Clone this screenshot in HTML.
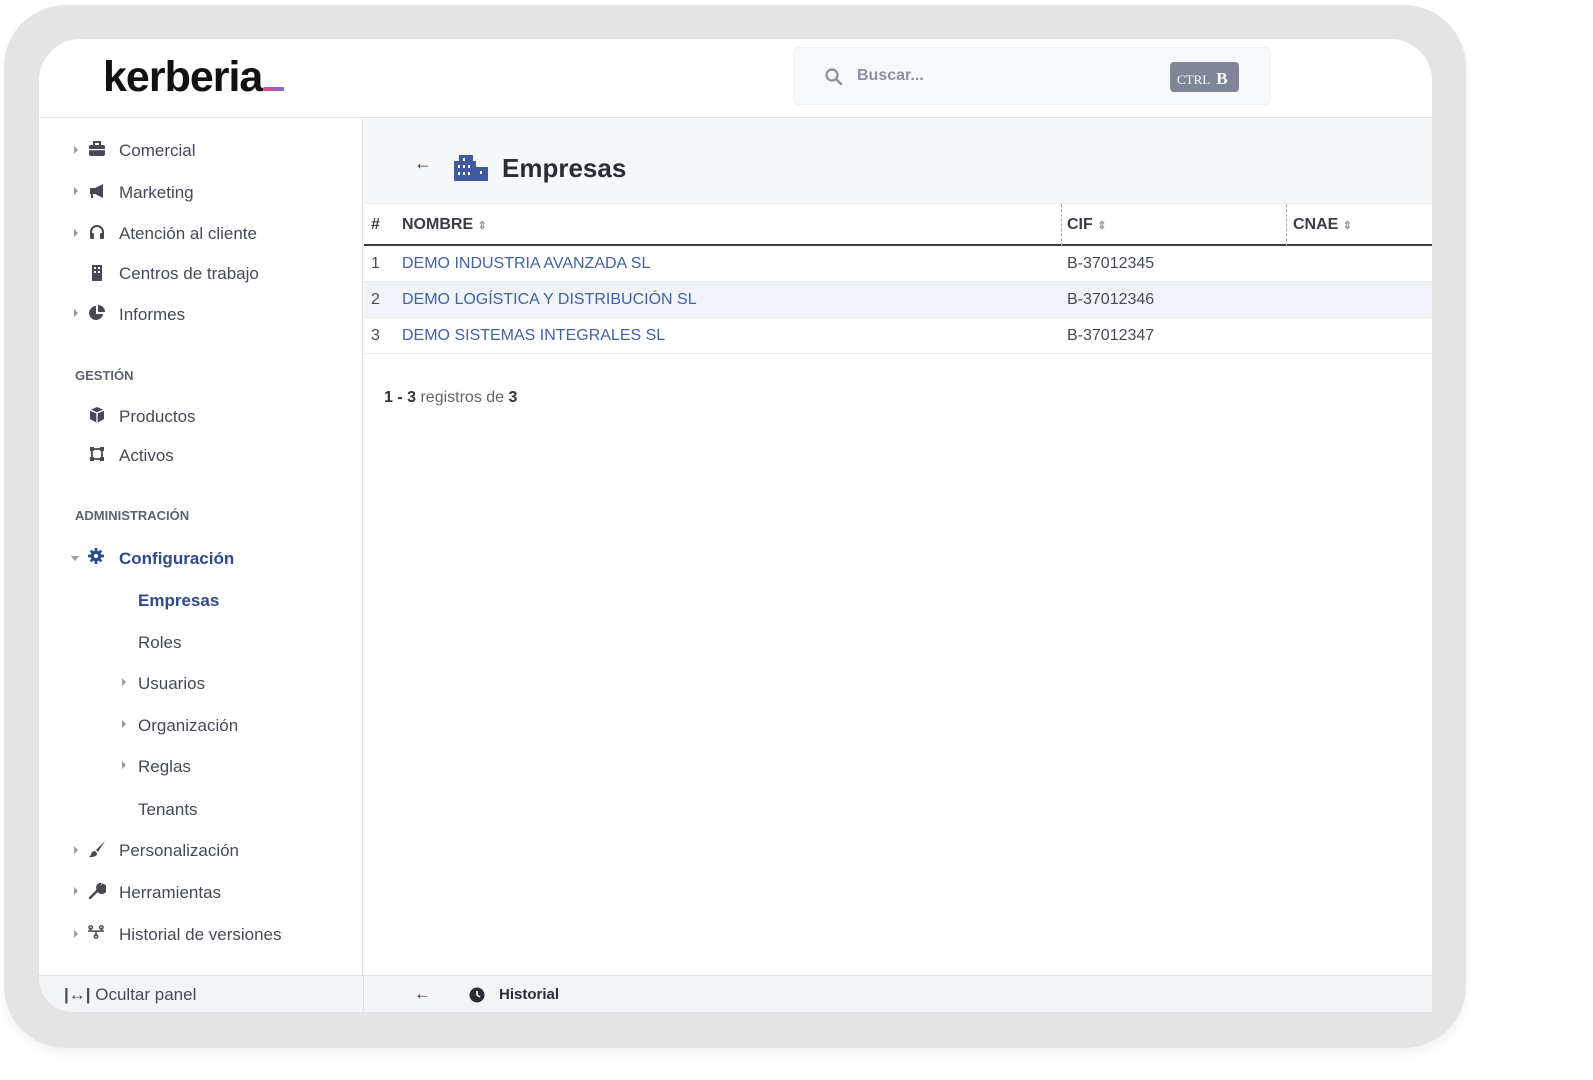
<!DOCTYPE html>
<html><head><meta charset="utf-8"><style>
*{box-sizing:border-box;margin:0;padding:0}
body{width:1593px;height:1080px;background:#fff;font-family:"Liberation Sans",sans-serif;position:relative;overflow:hidden;color:#454a56}
.frame{position:absolute;left:4px;top:5px;width:1462px;height:1043px;background:#e4e4e4;border-radius:62px;box-shadow:0 6px 10px rgba(0,0,0,.05)}
.screen{position:absolute;left:39px;top:39px;width:1393px;height:973px;background:#fff;border-radius:42px 42px 0 34px;overflow:hidden}
.hdr{position:absolute;left:0;top:0;width:100%;height:79px;border-bottom:1px solid #e3e5e9;background:#fff}
.logo{position:absolute;left:64px;top:14px;font-size:43px;font-weight:bold;color:#111;letter-spacing:-1px}
.logo i{display:inline-block;width:20px;height:4px;background:linear-gradient(90deg,#e8457b,#7a6fd8);margin-left:2px;vertical-align:0}
.search{position:absolute;left:754px;top:8px;width:478px;height:58px;background:#f7f8fa;border:1px solid #eef0f3;border-radius:6px}
.search span{position:absolute;left:63px;top:19px;font-size:16px;font-weight:bold;color:#8b91a0}
.kbd{position:absolute;left:376px;top:14px;width:69px;height:30px;background:#7f8596;border-radius:4px;color:#fff;font-family:"Liberation Serif",serif;font-size:13px;padding:7px 0 0 7px}
.kbd b{font-size:17px;margin-left:6px}
.side{position:absolute;left:0;top:80px;width:324px;height:856px;border-right:1px solid #dfe2e7}
.it{position:absolute;font-size:17px;color:#454a56}
.car{position:absolute;width:0;height:0;border-left:4px solid #999;border-top:4px solid transparent;border-bottom:4px solid transparent}
.sec{position:absolute;left:36px;font-size:13px;font-weight:bold;color:#5d6270}
.ic{position:absolute;width:18px;height:16px}
.main{position:absolute;left:325px;top:80px;right:0;height:856px}
.mh{height:85px;background:#f6f7f9;border-bottom:1px solid #eceef1;position:relative}
.th{position:absolute;top:85px;left:0;right:0;height:42px;border-bottom:2px solid #3a3d45;font-weight:bold;font-size:16px;color:#3a3d45}
.row{position:absolute;left:0;right:0;height:36px;border-bottom:1px solid #e8eaee;font-size:16px}
.row span{position:absolute;top:9px}
.lnk{color:#4262a0}
.foot{position:absolute;left:0;top:936px;width:100%;height:37px;background:#f3f4f7;border-top:1px solid #dcdfe4}
</style></head><body>
<div class="frame"></div>
<div class="screen">
 <div class="hdr">
  <div class="logo">kerberia<i></i></div>
  <div class="search">
   <svg style="position:absolute;left:30px;top:19px" width="20" height="20" viewBox="0 0 20 20"><circle cx="8" cy="8" r="5.5" fill="none" stroke="#8b91a0" stroke-width="2.2"/><path d="M12 12l5 5" stroke="#8b91a0" stroke-width="2.6" stroke-linecap="round"/></svg>
   <span>Buscar...</span>
   <div class="kbd">CTRL<b>B</b></div>
  </div>
 </div>
 <div class="side">
  <div class="car" style="left:35px;top:27px"></div><svg class="ic" style="left:49px;top:22px" viewBox="0 0 18 16"><rect x="1" y="4" width="16" height="11" rx="2" fill="#454a56"/><rect x="6" y="1" width="6" height="4" fill="none" stroke="#454a56" stroke-width="2"/><rect x="1" y="8" width="16" height="1.2" fill="#fff"/></svg><div class="it" style="left:80px;top:22px">Comercial</div>
  <div class="car" style="left:35px;top:68px"></div><svg class="ic" style="left:49px;top:64px" viewBox="0 0 18 16"><path d="M2 5h5l8-4v14l-8-4H5v4H3v-4H2z" fill="#454a56"/></svg><div class="it" style="left:80px;top:64px">Marketing</div>
  <div class="car" style="left:35px;top:110px"></div><svg class="ic" style="left:49px;top:105px" viewBox="0 0 18 16"><path d="M3 10V8a6 6 0 0112 0v2" fill="none" stroke="#454a56" stroke-width="2"/><rect x="2" y="9" width="4" height="6" rx="1" fill="#454a56"/><rect x="12" y="9" width="4" height="6" rx="1" fill="#454a56"/></svg><div class="it" style="left:80px;top:105px">Atención al cliente</div>
  <svg class="ic" style="left:49px;top:146px" viewBox="0 0 18 16"><rect x="4" y="0" width="10" height="16" fill="#454a56"/><rect x="6" y="2" width="2" height="2" fill="#fff"/><rect x="10" y="2" width="2" height="2" fill="#fff"/><rect x="6" y="6" width="2" height="2" fill="#fff"/><rect x="10" y="6" width="2" height="2" fill="#fff"/></svg><div class="it" style="left:80px;top:145px">Centros de trabajo</div>
  <div class="car" style="left:35px;top:190px"></div><svg class="ic" style="left:49px;top:186px" viewBox="0 0 18 16"><path d="M8 1a7 7 0 107 8H8z" fill="#454a56"/><path d="M10 0v7h7a7 7 0 00-7-7z" fill="#454a56"/></svg><div class="it" style="left:80px;top:186px">Informes</div>
  <div class="sec" style="top:249px">GESTIÓN</div>
  <svg class="ic" style="left:49px;top:288px" viewBox="0 0 18 16"><path d="M9 0l7 3v9l-7 4-7-4V3z" fill="#454a56"/><path d="M2 3l7 3 7-3M9 6v10" stroke="#fff" stroke-width="1.3" fill="none"/></svg><div class="it" style="left:80px;top:288px">Productos</div>
  <svg class="ic" style="left:49px;top:327px" viewBox="0 0 18 16"><rect x="4" y="3" width="10" height="10" fill="none" stroke="#454a56" stroke-width="1.8"/><rect x="2" y="1" width="4" height="4" fill="#454a56"/><rect x="12" y="1" width="4" height="4" fill="#454a56"/><rect x="2" y="11" width="4" height="4" fill="#454a56"/><rect x="12" y="11" width="4" height="4" fill="#454a56"/></svg><div class="it" style="left:80px;top:327px">Activos</div>
  <div class="sec" style="top:389px">ADMINISTRACIÓN</div>
  <div style="position:absolute;left:32px;top:437px;border-top:5px solid #999;border-left:4px solid transparent;border-right:4px solid transparent"></div>
  <svg class="ic" style="left:48px;top:429px" viewBox="0 0 18 18"><circle cx="9" cy="9" r="6" fill="#2f4a8c"/><path d="M9 0v18M0 9h18M3 3l12 12M15 3L3 15" stroke="#2f4a8c" stroke-width="3"/><circle cx="9" cy="9" r="2.4" fill="#fff"/></svg><div class="it" style="left:80px;top:430px;color:#2f4a8c;font-weight:bold">Configuración</div>
  <div class="it" style="left:99px;top:472px;color:#2f4a8c;font-weight:bold">Empresas</div>
  <div class="it" style="left:99px;top:514px">Roles</div>
  <div class="car" style="left:83px;top:559px"></div><div class="it" style="left:99px;top:555px">Usuarios</div>
  <div class="car" style="left:83px;top:601px"></div><div class="it" style="left:99px;top:597px">Organización</div>
  <div class="car" style="left:83px;top:642px"></div><div class="it" style="left:99px;top:638px">Reglas</div>
  <div class="it" style="left:99px;top:681px">Tenants</div>
  <div class="car" style="left:35px;top:727px"></div><svg class="ic" style="left:49px;top:722px" viewBox="0 0 18 16"><path d="M17 0L8 9l2 2z" fill="#454a56"/><path d="M7 10c-3 0-4 2-4 4l-2 2c4 0 8 0 8-4z" fill="#454a56"/></svg><div class="it" style="left:80px;top:722px">Personalización</div>
  <div class="car" style="left:35px;top:768px"></div><svg class="ic" style="left:49px;top:764px" viewBox="0 0 18 16"><path d="M2 15l8-8M10 7a4 4 0 105-5l-2 3-2-1 1-3a4 4 0 00-2 6z" stroke="#454a56" stroke-width="2.5" fill="#454a56" stroke-linecap="round"/></svg><div class="it" style="left:80px;top:764px">Herramientas</div>
  <div class="car" style="left:35px;top:811px"></div><svg class="ic" style="left:48px;top:805px" viewBox="0 0 20 16"><path d="M1 7h18M4 3v4M16 3v4M10 7v6" stroke="#454a56" stroke-width="1.6" fill="none"/><circle cx="4" cy="3" r="2" fill="none" stroke="#454a56" stroke-width="1.4"/><circle cx="16" cy="3" r="2" fill="none" stroke="#454a56" stroke-width="1.4"/><circle cx="10" cy="13" r="2" fill="none" stroke="#454a56" stroke-width="1.4"/></svg><div class="it" style="left:80px;top:806px">Historial de versiones</div>
 </div>
 <div class="main">
  <div class="mh">
   <div style="position:absolute;left:50px;top:34px;font-size:18px;color:#333">&#8592;</div>
   <svg style="position:absolute;left:90px;top:34px" width="34" height="28" viewBox="0 0 34 28"><rect x="0" y="8" width="22" height="20" fill="#3f5aa0"/><rect x="5" y="2" width="14" height="8" fill="#3f5aa0"/><rect x="22" y="14" width="12" height="14" fill="#3f5aa0"/><g fill="#fff"><rect x="4" y="12" width="2" height="3"/><rect x="9" y="12" width="2" height="3"/><rect x="14" y="12" width="2" height="3"/><rect x="4" y="19" width="2" height="3"/><rect x="9" y="19" width="2" height="3"/><rect x="14" y="19" width="2" height="3"/><rect x="26" y="18" width="2" height="3"/><rect x="9" y="5" width="2" height="3"/></g></svg>
   <div style="position:absolute;left:138px;top:34px;font-size:26px;font-weight:bold;color:#2a2d35">Empresas</div>
  </div>
  <div class="th">
   <span style="position:absolute;left:7px;top:12px">#</span>
   <span style="position:absolute;left:38px;top:12px">NOMBRE <small style="color:#999;font-size:11px">&#8661;</small></span>
   <div style="position:absolute;left:697px;top:0;height:42px;border-left:1px dashed #aaa"></div>
   <span style="position:absolute;left:703px;top:12px">CIF <small style="color:#999;font-size:11px">&#8661;</small></span>
   <div style="position:absolute;left:922px;top:0;height:42px;border-left:1px dashed #aaa"></div>
   <span style="position:absolute;left:929px;top:12px">CNAE <small style="color:#999;font-size:11px">&#8661;</small></span>
  </div>
  <div class="row" style="top:127px"><span style="left:7px">1</span><span class="lnk" style="left:38px">DEMO INDUSTRIA AVANZADA SL</span><span style="left:703px">B-37012345</span></div>
  <div class="row" style="top:163px;background:#f0f3f8"><span style="left:7px">2</span><span class="lnk" style="left:38px">DEMO LOGÍSTICA Y DISTRIBUCIÓN SL</span><span style="left:703px">B-37012346</span></div>
  <div class="row" style="top:199px"><span style="left:7px">3</span><span class="lnk" style="left:38px">DEMO SISTEMAS INTEGRALES SL</span><span style="left:703px">B-37012347</span></div>
  <div style="position:absolute;left:20px;top:270px;font-size:16px;color:#666"><b style="color:#333">1 - 3</b> registros de <b style="color:#333">3</b></div>
 </div>
 <div class="foot">
  <div style="position:absolute;left:25px;top:9px;font-size:17px;color:#454a56"><b>|&#8596;|</b> Ocultar panel</div>
  <div style="position:absolute;left:324px;top:0;height:37px;border-left:1px solid #dcdfe4"></div>
  <div style="position:absolute;left:375px;top:8px;font-size:17px;color:#333">&#8592;</div>
  <svg style="position:absolute;left:430px;top:11px" width="16" height="16" viewBox="0 0 16 16"><circle cx="8" cy="8" r="7.5" fill="#2a2d35"/><path d="M8 4v4l3 2" stroke="#fff" stroke-width="1.6" fill="none"/></svg>
  <div style="position:absolute;left:460px;top:10px;font-size:15px;font-weight:bold;color:#2a2d35">Historial</div>
 </div>
</div>
</body></html>
